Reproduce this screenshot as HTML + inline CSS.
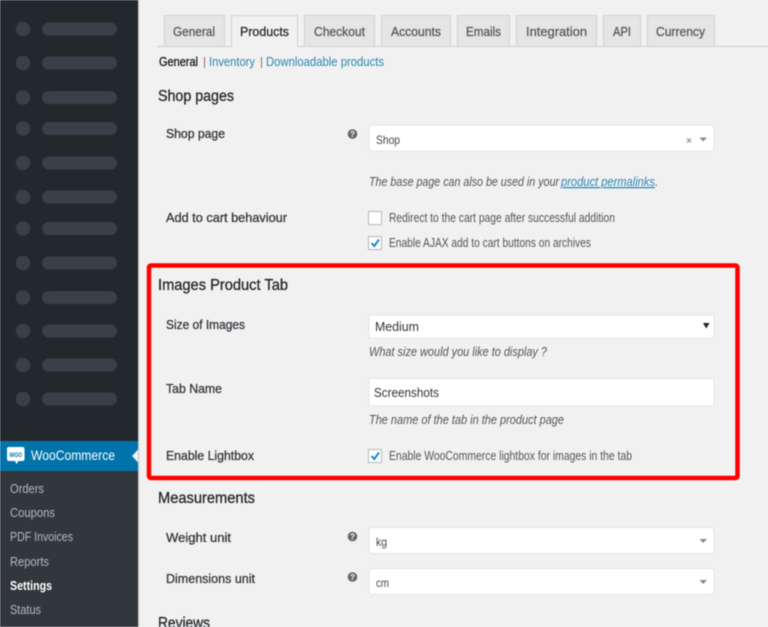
<!DOCTYPE html>
<html><head><meta charset="utf-8"><title>WooCommerce Settings</title>
<style>
html,body{margin:0;padding:0;width:768px;height:627px;overflow:hidden;background:#f1f1f1}
svg{display:block;filter:blur(.4px)}
text{font-family:"Liberation Sans",sans-serif;font-size:12px;fill:#555}
.m{fill:#b4b9be;font-size:12.5px}
.t{fill:#555;stroke:#555;stroke-width:.25px;font-size:13px}
.l{fill:#32373c;stroke:#32373c;stroke-width:.3px;font-size:13px}
.h{fill:#23282d;stroke:#23282d;stroke-width:.3px;font-size:15.500px}
.d{font-style:italic;fill:#555;font-size:12.500px}
.a{fill:#2a86b4;font-size:12.500px}
.b{fill:#444;font-size:12px}
</style></head><body>
<svg width="768" height="627" viewBox="0 0 768 627" xmlns="http://www.w3.org/2000/svg">
<rect width="768" height="627" fill="#f1f1f1"/>
<rect width="138" height="627" fill="#23282d"/>
<rect x="138" width="1" height="627" fill="#c4c4c4"/>
<g fill="#3a4047">
<circle cx="23" cy="29" r="7.2"/><rect x="42" y="22.5" width="75" height="13" rx="6.5"/>
<circle cx="23" cy="63" r="7.2"/><rect x="42" y="56.5" width="75" height="13" rx="6.5"/>
<circle cx="23" cy="97.5" r="7.2"/><rect x="42" y="91" width="75" height="13" rx="6.5"/>
<circle cx="23" cy="128.5" r="7.2"/><rect x="42" y="122" width="75" height="13" rx="6.5"/>
<circle cx="23" cy="163" r="7.2"/><rect x="42" y="156.5" width="75" height="13" rx="6.5"/>
<circle cx="23" cy="197" r="7.2"/><rect x="42" y="190.5" width="75" height="13" rx="6.5"/>
<circle cx="23" cy="228.5" r="7.2"/><rect x="42" y="222" width="75" height="13" rx="6.5"/>
<circle cx="23" cy="263" r="7.2"/><rect x="42" y="256.5" width="75" height="13" rx="6.5"/>
<circle cx="23" cy="297.5" r="7.2"/><rect x="42" y="291" width="75" height="13" rx="6.5"/>
<circle cx="23" cy="331" r="7.2"/><rect x="42" y="324.5" width="75" height="13" rx="6.5"/>
<circle cx="23" cy="365" r="7.2"/><rect x="42" y="358.5" width="75" height="13" rx="6.5"/>
<circle cx="23" cy="399" r="7.2"/><rect x="42" y="392.5" width="75" height="13" rx="6.5"/>
</g>
<rect y="441" width="138" height="30" fill="#0073aa"/>
<rect y="471" width="138" height="156" fill="#32373c"/>
<path d="M138 449.500L132 456L138 462.500Z" fill="#f1f1f1"/>
<path d="M9 447H22.500Q24.500 447 24.500 449V459Q24.500 461 22.500 461H18.500L16.500 464L15 461H9Q7 461 7 459V449Q7 447 9 447Z" fill="#fff"/>
<text x="9.500" y="457" style="font-size:6px;font-weight:bold;fill:#0073aa" textLength="12.500" lengthAdjust="spacingAndGlyphs">WOO</text>
<text x="31" y="460" style="font-size:13.500px;fill:#fff" textLength="84" lengthAdjust="spacingAndGlyphs">WooCommerce</text>
<text class="m" x="10" y="493" textLength="34" lengthAdjust="spacingAndGlyphs">Orders</text>
<text class="m" x="10" y="517" textLength="45" lengthAdjust="spacingAndGlyphs">Coupons</text>
<text class="m" x="10" y="541" textLength="63" lengthAdjust="spacingAndGlyphs">PDF Invoices</text>
<text class="m" x="10" y="566" textLength="39" lengthAdjust="spacingAndGlyphs">Reports</text>
<text x="10" y="590" style="fill:#fff;font-weight:bold;font-size:12.500px" textLength="42" lengthAdjust="spacingAndGlyphs">Settings</text>
<text class="m" x="10" y="614" textLength="31" lengthAdjust="spacingAndGlyphs">Status</text>

<rect x="157" y="46" width="611" height="1" fill="#ccc"/>
<g fill="#e5e5e5" stroke="#d2d2d2">
<rect x="164.500" y="15.500" width="60" height="31"/>
<rect x="304.500" y="15.500" width="70" height="31"/>
<rect x="381.500" y="15.500" width="69" height="31"/>
<rect x="457.500" y="15.500" width="52" height="31"/>
<rect x="516.500" y="15.500" width="80" height="31"/>
<rect x="603.500" y="15.500" width="37" height="31"/>
<rect x="647.500" y="15.500" width="67" height="31"/>
</g>
<path d="M231.500 47V15.500H297.500V47" fill="#f1f1f1" stroke="#d2d2d2"/>
<rect x="232" y="46" width="65" height="2" fill="#f1f1f1"/>
<text class="t" x="173" y="36" textLength="42" lengthAdjust="spacingAndGlyphs">General</text>
<text class="t" x="240" y="36" style="fill:#23282d;stroke:#23282d" textLength="49" lengthAdjust="spacingAndGlyphs">Products</text>
<text class="t" x="314" y="36" textLength="51" lengthAdjust="spacingAndGlyphs">Checkout</text>
<text class="t" x="391" y="36" textLength="50" lengthAdjust="spacingAndGlyphs">Accounts</text>
<text class="t" x="466" y="36" textLength="35" lengthAdjust="spacingAndGlyphs">Emails</text>
<text class="t" x="526" y="36" textLength="61" lengthAdjust="spacingAndGlyphs">Integration</text>
<text class="t" x="613" y="36" textLength="18" lengthAdjust="spacingAndGlyphs">API</text>
<text class="t" x="656" y="36" textLength="49" lengthAdjust="spacingAndGlyphs">Currency</text>

<text x="159" y="66" style="fill:#111;stroke:#111;stroke-width:.25px;font-size:12.500px" textLength="39" lengthAdjust="spacingAndGlyphs">General</text>
<rect x="204" y="57" width="1" height="11" fill="#a0694f"/>
<text class="a" x="209" y="66" textLength="46" lengthAdjust="spacingAndGlyphs">Inventory</text>
<rect x="261" y="57" width="1" height="11" fill="#a0694f"/>
<text class="a" x="266" y="66" textLength="118" lengthAdjust="spacingAndGlyphs">Downloadable products</text>

<text class="h" x="158" y="101" textLength="76" lengthAdjust="spacingAndGlyphs">Shop pages</text>
<text class="l" x="166" y="138" textLength="59" lengthAdjust="spacingAndGlyphs">Shop page</text>
<circle cx="352.500" cy="134" r="4.800" fill="#666"/>
<text x="352.500" y="137" text-anchor="middle" style="font-size:8px;font-weight:bold;fill:#fff">?</text>
<rect x="369" y="125" width="345" height="26" rx="3" fill="#fff" stroke="#e4e4e4"/>
<text class="b" x="376" y="144" textLength="24" lengthAdjust="spacingAndGlyphs">Shop</text>
<path d="M687 138.500L691 142.500M691 138.500L687 142.500" stroke="#888" stroke-width="1.100" fill="none"/>
<path d="M699.500 137.500H707L703.200 141.500Z" fill="#888"/>
<text class="d" x="369" y="186" textLength="190" lengthAdjust="spacingAndGlyphs">The base page can also be used in your</text>
<text class="d" x="561" y="186" style="fill:#2a86b4;text-decoration:underline" textLength="94" lengthAdjust="spacingAndGlyphs">product permalinks</text>
<text class="d" x="655" y="186">.</text>

<text class="l" x="166" y="222" textLength="121" lengthAdjust="spacingAndGlyphs">Add to cart behaviour</text>
<rect x="368.500" y="211.500" width="13" height="13" fill="#fff" stroke="#b4b9be"/>
<text x="389" y="222" style="font-size:12.500px" textLength="226" lengthAdjust="spacingAndGlyphs">Redirect to the cart page after successful addition</text>
<rect x="368.500" y="236.500" width="13" height="13" fill="#fff" stroke="#b4b9be"/>
<path d="M371.500 243L374.300 246L379 239.500" fill="none" stroke="#1e8cbe" stroke-width="2"/>
<text x="389" y="247" style="font-size:12.500px" textLength="202" lengthAdjust="spacingAndGlyphs">Enable AJAX add to cart buttons on archives</text>

<rect x="149" y="265.500" width="588.500" height="212.500" rx="2" fill="none" stroke="#fe0000" stroke-width="4.500"/>

<text class="h" x="158" y="290" textLength="130" lengthAdjust="spacingAndGlyphs">Images Product Tab</text>
<text class="l" x="166" y="329" textLength="79" lengthAdjust="spacingAndGlyphs">Size of Images</text>
<rect x="369" y="315" width="345" height="23" fill="#fff" stroke="#e4e4e4"/>
<text x="375" y="331" style="font-size:13px;fill:#333" textLength="44" lengthAdjust="spacingAndGlyphs">Medium</text>
<path d="M703 323H709.500L706.200 328.500Z" fill="#222"/>
<text class="d" x="369" y="356" textLength="178" lengthAdjust="spacingAndGlyphs">What size would you like to display ?</text>
<text class="l" x="166" y="393" textLength="56" lengthAdjust="spacingAndGlyphs">Tab Name</text>
<rect x="369" y="378.500" width="345" height="27.500" fill="#fff" stroke="#e4e4e4"/>
<text x="374" y="397" style="font-size:13px;fill:#333" textLength="65" lengthAdjust="spacingAndGlyphs">Screenshots</text>
<text class="d" x="369" y="424" textLength="195" lengthAdjust="spacingAndGlyphs">The name of the tab in the product page</text>
<text class="l" x="166" y="460" textLength="88" lengthAdjust="spacingAndGlyphs">Enable Lightbox</text>
<rect x="368.500" y="449.500" width="13" height="13" fill="#fff" stroke="#b4b9be"/>
<path d="M371.500 456L374.300 459L379 452.500" fill="none" stroke="#1e8cbe" stroke-width="2"/>
<text x="389" y="460" style="font-size:12.500px" textLength="243" lengthAdjust="spacingAndGlyphs">Enable WooCommerce lightbox for images in the tab</text>

<text class="h" x="158" y="503" textLength="97" lengthAdjust="spacingAndGlyphs">Measurements</text>
<text class="l" x="166" y="542" textLength="65" lengthAdjust="spacingAndGlyphs">Weight unit</text>
<circle cx="352.500" cy="536.500" r="4.800" fill="#666"/>
<text x="352.500" y="539.500" text-anchor="middle" style="font-size:8px;font-weight:bold;fill:#fff">?</text>
<rect x="369" y="527.500" width="345" height="26" rx="3" fill="#fff" stroke="#e4e4e4"/>
<text class="b" x="376" y="546" textLength="11" lengthAdjust="spacingAndGlyphs">kg</text>
<path d="M699.500 539H707L703.200 543Z" fill="#888"/>
<text class="l" x="166" y="583" textLength="89" lengthAdjust="spacingAndGlyphs">Dimensions unit</text>
<circle cx="352.500" cy="577" r="4.800" fill="#666"/>
<text x="352.500" y="580" text-anchor="middle" style="font-size:8px;font-weight:bold;fill:#fff">?</text>
<rect x="369" y="568.500" width="345" height="26" rx="3" fill="#fff" stroke="#e4e4e4"/>
<text class="b" x="376" y="587" textLength="13" lengthAdjust="spacingAndGlyphs">cm</text>
<path d="M699.500 580H707L703.200 584Z" fill="#888"/>
<text class="h" x="158" y="628" textLength="52" lengthAdjust="spacingAndGlyphs">Reviews</text>
</svg>
</body></html>
